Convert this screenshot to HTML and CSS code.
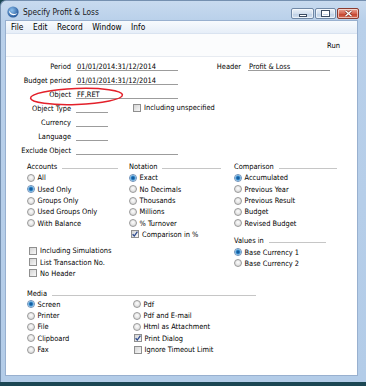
FILE: index.html
```html
<!DOCTYPE html>
<html lang="en">
<head>
    <meta charset="UTF-8">
    <title>Specify Profit &amp; Loss</title>
    <link rel="stylesheet" href="styles.css">
</head>
<body>
    <div class="window">
        <div class="titlebar">
            <svg class="app-icon" viewBox="0 0 12 12" width="12" height="12">
                <defs>
                    <radialGradient id="ball" cx="40%" cy="35%" r="70%">
                        <stop offset="0" stop-color="#8cc0ee"/>
                        <stop offset="1" stop-color="#1c4f93"/>
                    </radialGradient>
                </defs>
                <circle cx="6" cy="6" r="5.6" fill="url(#ball)"/>
                <path d="M2 4.5 C2 9 7.5 11 10.5 7 C8 8.8 4 8.5 2 4.5Z" fill="#fff"/>
            </svg>
            <span class="caption">Specify Profit &amp; Loss</span>
            <div class="caption-buttons">
                <span class="cbtn cbtn-min"><i></i></span>
                <span class="cbtn cbtn-max"><i></i></span>
                <span class="cbtn cbtn-close">
                    <svg viewBox="0 0 9 7" width="9" height="7">
                        <path d="M1.5 0.8 L7.5 6.2 M7.5 0.8 L1.5 6.2" stroke="#7b2b1f" stroke-width="2.6"/>
                        <path d="M1.5 0.8 L7.5 6.2 M7.5 0.8 L1.5 6.2" stroke="#fff" stroke-width="1.4"/>
                    </svg>
                </span>
            </div>
        </div>

        <div class="client">
            <ul class="menubar">
                <li>File</li>
                <li>Edit</li>
                <li>Record</li>
                <li>Window</li>
                <li>Info</li>
            </ul>

            <div class="toolbar"><span>Run</span></div>

            <div class="form">
                <!-- Header fields -->
                <div class="fields">
                    <div class="row">
                        <span class="label">Period</span>
                        <span class="field field-long">01/01/2014:31/12/2014</span>
                        <span class="side-label">Header</span>
                        <span class="field field-header">Profit &amp; Loss</span>
                    </div>
                    <div class="row">
                        <span class="label">Budget period</span>
                        <span class="field field-long">01/01/2014:31/12/2014</span>
                    </div>
                    <div class="row">
                        <span class="label">Object</span>
                        <span class="field field-long">FF,RET</span>
                    </div>
                    <div class="row">
                        <span class="label">Object Type</span>
                        <span class="field field-short"></span>
                        <span class="opt check inline-check"><span class="box"></span>Including unspecified</span>
                    </div>
                    <div class="row">
                        <span class="label">Currency</span>
                        <span class="field field-short"></span>
                    </div>
                    <div class="row">
                        <span class="label">Language</span>
                        <span class="field field-short"></span>
                    </div>
                    <div class="row">
                        <span class="label">Exclude Object</span>
                        <span class="field field-long"></span>
                    </div>
                </div>

                <!-- Option groups -->
                <div class="options">
                    <div class="group group-accounts">
                        <div class="legend">Accounts</div>
                        <div class="opt"><span class="radio"></span>All</div>
                        <div class="opt"><span class="radio on"></span>Used Only</div>
                        <div class="opt"><span class="radio"></span>Groups Only</div>
                        <div class="opt"><span class="radio"></span>Used Groups Only</div>
                        <div class="opt"><span class="radio"></span>With Balance</div>
                        <div class="checks">
                            <div class="opt check"><span class="box"></span>Including Simulations</div>
                            <div class="opt check"><span class="box"></span>List Transaction No.</div>
                            <div class="opt check"><span class="box"></span>No Header</div>
                        </div>
                    </div>
                    <div class="group group-notation">
                        <div class="legend">Notation</div>
                        <div class="opt"><span class="radio on"></span>Exact</div>
                        <div class="opt"><span class="radio"></span>No Decimals</div>
                        <div class="opt"><span class="radio"></span>Thousands</div>
                        <div class="opt"><span class="radio"></span>Millions</div>
                        <div class="opt"><span class="radio"></span>% Turnover</div>
                        <div class="opt check">
                            <span class="box"><svg viewBox="0 0 8 8" width="8" height="8"><path d="M1.6 4.2 L3.3 6 L6.4 1.6" fill="none" stroke="#2c4a8e" stroke-width="1.3"/></svg></span>Comparison in %
                        </div>
                    </div>
                    <div class="group group-comparison">
                        <div class="legend">Comparison</div>
                        <div class="opt"><span class="radio on"></span>Accumulated</div>
                        <div class="opt"><span class="radio"></span>Previous Year</div>
                        <div class="opt"><span class="radio"></span>Previous Result</div>
                        <div class="opt"><span class="radio"></span>Budget</div>
                        <div class="opt"><span class="radio"></span>Revised Budget</div>
                        <div class="values">
                            <div class="legend">Values in</div>
                            <div class="opt"><span class="radio on"></span>Base Currency 1</div>
                            <div class="opt"><span class="radio"></span>Base Currency 2</div>
                        </div>
                    </div>
                </div>

                <!-- Media -->
                <div class="media">
                    <div class="legend">Media</div>
                    <div class="media-grid">
                        <div class="group">
                            <div class="opt"><span class="radio on"></span>Screen</div>
                            <div class="opt"><span class="radio"></span>Printer</div>
                            <div class="opt"><span class="radio"></span>File</div>
                            <div class="opt"><span class="radio"></span>Clipboard</div>
                            <div class="opt"><span class="radio"></span>Fax</div>
                        </div>
                        <div class="group">
                            <div class="opt"><span class="radio"></span>Pdf</div>
                            <div class="opt"><span class="radio"></span>Pdf and E-mail</div>
                            <div class="opt"><span class="radio"></span>Html as Attachment</div>
                            <div class="opt check">
                                <span class="box"><svg viewBox="0 0 8 8" width="8" height="8"><path d="M1.6 4.2 L3.3 6 L6.4 1.6" fill="none" stroke="#2c4a8e" stroke-width="1.3"/></svg></span>Print Dialog
                            </div>
                            <div class="opt check"><span class="box"></span>Ignore Timeout Limit</div>
                        </div>
                    </div>
                </div>
            </div>
        </div>
    </div>

    <!-- hand-drawn highlight round the Object field -->
    <svg class="highlight" viewBox="0 0 95 19" width="95" height="19">
        <ellipse cx="47.5" cy="9.5" rx="46" ry="8" fill="none" stroke="#e3202a" stroke-width="1.5" transform="rotate(-2 47.5 9.5)"/>
    </svg>
</body>
</html>
```

FILE: styles.css
```css
/* General */
* {
    box-sizing: border-box;
}

html, body {
    margin: 0;
    padding: 0;
}

body {
    position: relative;
    width: 366px;
    height: 386px;
    overflow: hidden;
    background: #1b4653;
    font-family: "DejaVu Sans Condensed", "DejaVu Sans", sans-serif;
    font-stretch: condensed;
    color: #000;
}

/* Window frame */
.window {
    height: 382px;
    display: flex;
    flex-direction: column;
    padding: 0 8px 6px 4px;
    border-top: 1px solid #7590b0;
    border-left: 1px solid #7590b0;
    border-top-left-radius: 6px;
    background: linear-gradient(#c8daef, #b9d0ea 20px, #b3cce8);
}

.titlebar {
    height: 19px;
    flex: none;
    display: flex;
    align-items: center;
    padding-top: 3px;
}

.app-icon {
    margin-left: 2px;
    margin-right: 4px;
}

.caption {
    font-size: 8.3px;
    color: #1a1a1a;
}

.caption-buttons {
    margin-left: auto;
    margin-right: -1px;
    align-self: flex-start;
    margin-top: 4px;
    display: flex;
    gap: 1px;
}

.cbtn {
    height: 11px;
    display: flex;
    align-items: center;
    justify-content: center;
    border: 1px solid #7088a6;
    border-radius: 2px;
    background: linear-gradient(#eaf1f9, #d2dfee 50%, #bdcfe5 51%, #d3e1f0);
    box-shadow: inset 0 0 0 1px rgba(255, 255, 255, 0.55);
}

.cbtn-min {
    width: 23px;
}

.cbtn-max {
    width: 21px;
}

.cbtn-close {
    width: 22px;
    border-color: #8b3b2f;
    background: linear-gradient(#e8a597, #d5644f 50%, #c2402a 51%, #d86c55);
}

.cbtn-min i {
    width: 8px;
    height: 3px;
    margin-top: 4px;
    border: 1px solid #3b4b62;
    background: #fff;
}

.cbtn-max i {
    width: 9px;
    height: 7px;
    border: 1px solid #3b4b62;
    box-shadow: inset 0 0 0 1px #fff, inset 0 2px 0 1px #fff;
}

/* Client area */
.client {
    flex: 1;
    display: flex;
    flex-direction: column;
    background: #fff;
    border: 1px solid #98b0cf;
}

.menubar {
    list-style: none;
    margin: 0;
    height: 13px;
    display: flex;
    align-items: center;
    gap: 9.5px;
    padding: 0 0 0 5px;
    font-size: 8.3px;
    color: #000;
    background: linear-gradient(#f7fafd, #e6eef8);
    border-bottom: 1px solid #d9e3f0;
}

.toolbar {
    height: 23px;
    display: flex;
    align-items: center;
    justify-content: flex-end;
    padding-right: 17px;
    font-size: 7.5px;
    background: #fbfcfd;
    border-bottom: 1px solid #e7ebf1;
}

.form {
    padding-top: 3px;
    font-size: 7.4px;
}

/* Header fields */
.row {
    display: flex;
    height: 14px;
    line-height: 14px;
    white-space: nowrap;
}

.label {
    width: 65px;
    text-align: right;
}

.field {
    margin-left: 5px;
    padding-left: 1px;
    background: linear-gradient(#9c9c9c, #9c9c9c) no-repeat 0 10px / 100% 1px;
}

.field-long {
    width: 102px;
}

.field-short {
    width: 32px;
}

.side-label {
    width: 63px;
    text-align: right;
}

.field-header {
    width: 82px;
    margin-left: 7px;
}

.inline-check {
    height: 14px;
    margin-left: 23px;
}

/* Option groups */
.options {
    display: grid;
    grid-template-columns: 102px 105px 103px;
    margin-top: 3px;
    padding-left: 21px;
}

.group {
    display: flex;
    flex-direction: column;
}

.legend {
    display: flex;
    align-items: center;
    gap: 5px;
    height: 11.3px;
    white-space: nowrap;
}

.legend::after {
    content: "";
    flex: 1;
    height: 1px;
    margin-top: 4px;
    background: #c6c6c6;
}

.group-accounts .legend {
    margin-right: 11px;
}

.group-notation .legend {
    margin-right: 13px;
}

.checks {
    margin-top: 16.4px;
}

.values {
    margin-top: 6.4px;
}

.values .legend {
    margin-right: 11px;
}

.opt {
    display: flex;
    align-items: center;
    height: 11.3px;
    white-space: nowrap;
}

.radio {
    flex: none;
    width: 8px;
    height: 8px;
    margin-right: 2.5px;
    border-radius: 50%;
    border: 1px solid #9a9a9a;
    background: radial-gradient(circle at 50% 40%, #fdfdfd, #e2e2e2 60%, #cdcdcd);
}

.radio.on {
    border-color: #6c8fb8;
    background: radial-gradient(circle, #0d4a86 0, #1e6fb5 1.4px, #63b2e6 2.4px, #d6e8f6 3px, #eef2f6 4px);
}

.check {
    padding-left: 2px;
}

.box {
    flex: none;
    width: 8px;
    height: 8px;
    margin-right: 3px;
    border: 1px solid #8f8f8f;
    background: linear-gradient(135deg, #d4d4d4, #f8f8f8);
    display: flex;
}

.box svg {
    margin: -1px;
}

/* Media */
.media {
    width: 250px;
    margin-top: 8.4px;
    padding-left: 21px;
}

.media-grid {
    display: grid;
    grid-template-columns: 106px 1fr;
}

.media .check {
    padding-left: 0.5px;
}

/* overlay */
.highlight {
    position: absolute;
    left: 29px;
    top: 87px;
}
```
